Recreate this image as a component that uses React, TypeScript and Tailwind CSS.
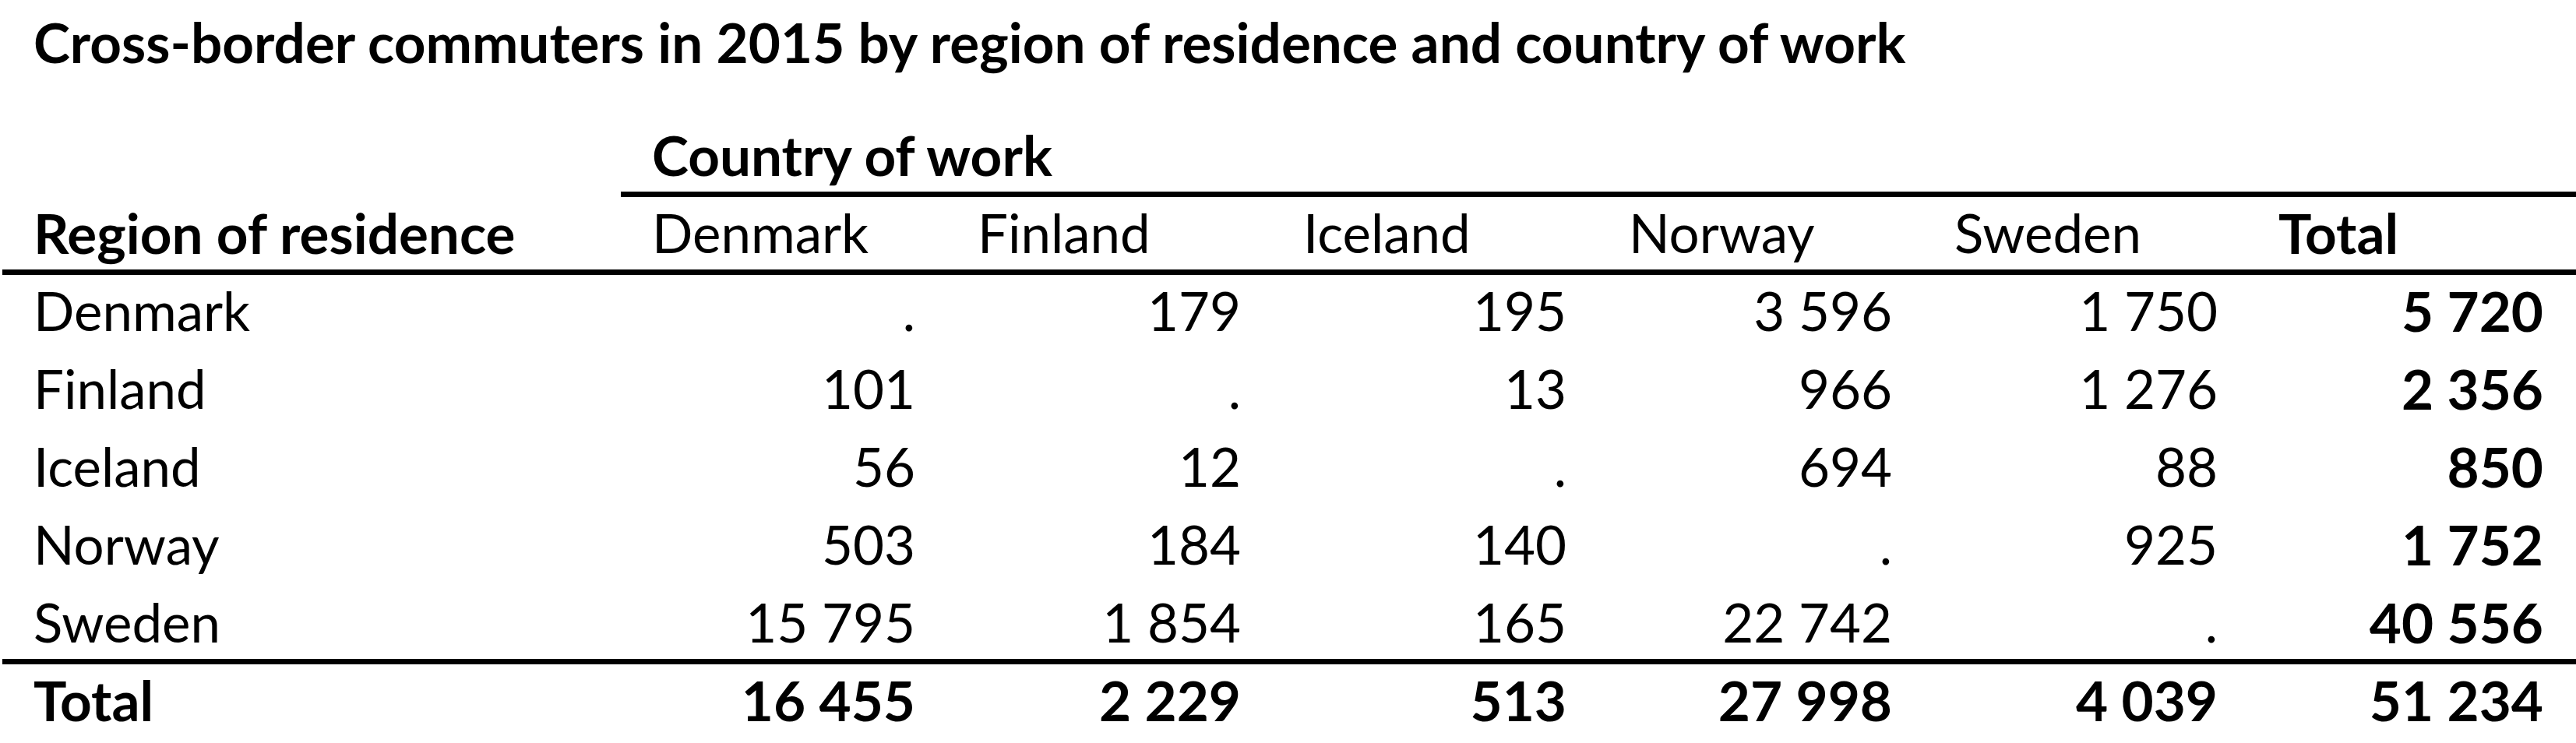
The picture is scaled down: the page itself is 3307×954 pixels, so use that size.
import React from 'react';

const countries = ['Denmark', 'Finland', 'Iceland', 'Norway', 'Sweden'];

const rows: { region: string; values: string[]; total: string }[] = [
  { region: 'Denmark', values: ['.', '179', '195', '3 596', '1 750'], total: '5 720' },
  { region: 'Finland', values: ['101', '.', '13', '966', '1 276'], total: '2 356' },
  { region: 'Iceland', values: ['56', '12', '.', '694', '88'], total: '850' },
  { region: 'Norway', values: ['503', '184', '140', '.', '925'], total: '1 752' },
  { region: 'Sweden', values: ['15 795', '1 854', '165', '22 742', '.'], total: '40 556' },
];

const totals = ['16 455', '2 229', '513', '27 998', '4 039', '51 234'];

const rowGrid = 'grid grid-cols-[794px_repeat(6,418px)] h-[100px] leading-[92px] whitespace-nowrap';
const bold = 'font-bold text-[71px]';

export default function App() {
  return (
    <div className="w-[3307px] h-[954px] bg-white text-black overflow-hidden font-['Lato',sans-serif] text-[69px]">
      <h1 className={`pl-[43px] ${bold} leading-[107px] mb-[46px] whitespace-nowrap`}>
        Cross-border commuters in 2015 by region of residence and country of work
      </h1>

      <div className="ml-[3px] w-[3304px]">
        {/* Country of work spanner */}
        <div className="grid grid-cols-[794px_1fr] h-[100px] leading-[92px]">
          <div />
          <div className={`border-b-[7px] border-black pl-[40px] ${bold}`}>Country of work</div>
        </div>

        {/* Column header */}
        <div className={`${rowGrid} border-b-[7px] border-black`}>
          <div className={`pl-[40px] ${bold}`}>Region of residence</div>
          {countries.map((c) => (
            <div key={c} className="pl-[40px]">{c}</div>
          ))}
          <div className={`pl-[38px] ${bold}`}>Total</div>
        </div>

        {/* Body rows */}
        {rows.map((r, i) => (
          <div key={r.region} className={`${rowGrid} ${i === rows.length - 1 ? 'border-b-[7px] border-black' : ''}`}>
            <div className="pl-[40px]">{r.region}</div>
            {r.values.map((v, j) => (
              <div key={j} className="pr-[40px] text-right">{v}</div>
            ))}
            <div className={`pr-[40px] text-right ${bold}`}>{r.total}</div>
          </div>
        ))}

        {/* Total row */}
        <div className={`${rowGrid} ${bold}`}>
          <div className="pl-[40px]">Total</div>
          {totals.map((t, j) => (
            <div key={j} className="pr-[40px] text-right">{t}</div>
          ))}
        </div>
      </div>
    </div>
  );
}
